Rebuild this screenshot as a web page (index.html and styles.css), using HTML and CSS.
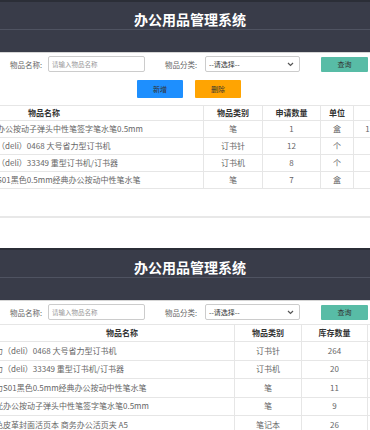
FILE: index.html
```html
<!DOCTYPE html>
<html lang="zh-CN">
<head>
    <meta charset="UTF-8">
    <meta name="viewport" content="width=device-width, initial-scale=1.0">
    <title>办公用品管理系统</title>
    <link rel="stylesheet" href="styles.css">
</head>
<body>
    <!-- 申请列表 -->
    <div class="panel">
        <header class="topbar">
            <div class="title-row"><h1>办公用品管理系统</h1></div>
            <div class="nav-row"></div>
        </header>
        <div class="search">
            <label class="label-name">物品名称:</label>
            <input type="text" class="input-name" placeholder="请输入物品名称">
            <label class="label-type">物品分类:</label>
            <div class="select">
                <select>
                    <option>--请选择--</option>
                </select>
                <svg width="7" height="5" viewBox="0 0 7 5"><path d="M1 1l2.5 2.5L6 1" fill="none" stroke="#555" stroke-width="1.2"/></svg>
            </div>
            <button class="btn btn-query">查询</button>
        </div>
        <div class="actions">
            <button class="btn btn-add">新增</button>
            <button class="btn btn-del">删除</button>
        </div>
        <div class="table-wrap">
            <table class="grid grid-apply">
                <colgroup>
                    <col class="c-name"><col class="c-type"><col class="c-num"><col class="c-unit"><col class="c-note">
                </colgroup>
                <thead>
                    <tr><th class="th-name">物品名称</th><th>物品类别</th><th>申请数量</th><th>单位</th><th>备注</th></tr>
                </thead>
                <tbody>
                    <tr><td class="td-name">晨光办公按动子弹头中性笔签字笔水笔0.5mm</td><td>笔</td><td>1</td><td>盒</td><td>1号楼领取</td></tr>
                    <tr><td class="td-name">得力（deli）0468 大号省力型订书机</td><td>订书针</td><td>12</td><td>个</td><td></td></tr>
                    <tr><td class="td-name">得力（deli）33349 重型订书机/订书器</td><td>订书机</td><td>8</td><td>个</td><td></td></tr>
                    <tr><td class="td-name">得力S01黑色0.5mm经典办公按动中性笔水笔</td><td>笔</td><td>7</td><td>盒</td><td></td></tr>
                </tbody>
            </table>
        </div>
    </div>

    <div class="gap-line"></div>

    <!-- 库存列表 -->
    <div class="panel">
        <header class="topbar">
            <div class="title-row"><h1>办公用品管理系统</h1></div>
            <div class="nav-row"></div>
        </header>
        <div class="search">
            <label class="label-name">物品名称:</label>
            <input type="text" class="input-name" placeholder="请输入物品名称">
            <label class="label-type">物品分类:</label>
            <div class="select">
                <select>
                    <option>--请选择--</option>
                </select>
                <svg width="7" height="5" viewBox="0 0 7 5"><path d="M1 1l2.5 2.5L6 1" fill="none" stroke="#555" stroke-width="1.2"/></svg>
            </div>
            <button class="btn btn-query">查询</button>
        </div>
        <div class="table-wrap stock-wrap">
            <table class="grid grid-stock">
                <colgroup>
                    <col class="c-name2"><col class="c-type2"><col class="c-stock"><col class="c-unit2">
                </colgroup>
                <thead>
                    <tr><th class="th-name">物品名称</th><th>物品类别</th><th>库存数量</th><th>单位</th></tr>
                </thead>
                <tbody>
                    <tr><td class="td-name">得力（deli）0468 大号省力型订书机</td><td>订书针</td><td>264</td><td>盒</td></tr>
                    <tr><td class="td-name">得力（deli）33349 重型订书机/订书器</td><td>订书机</td><td>20</td><td>个</td></tr>
                    <tr><td class="td-name">得力S01黑色0.5mm经典办公按动中性笔水笔</td><td>笔</td><td>11</td><td>盒</td></tr>
                    <tr><td class="td-name">晨光办公按动子弹头中性笔签字笔水笔0.5mm</td><td>笔</td><td>9</td><td>盒</td></tr>
                    <tr><td class="td-name">黑色皮革封面活页本 商务办公活页夹 A5</td><td>笔记本</td><td>26</td><td>本</td></tr>
                </tbody>
            </table>
        </div>
    </div>
</body>
</html>
```

FILE: styles.css
```css
* {
    box-sizing: border-box;
}
body {
    margin: 0;
    width: 370px;
    height: 430px;
    overflow: hidden;
    background: #fff;
    color: #333;
    font-family: "Noto Sans CJK SC", "Noto Sans", sans-serif;
}
.topbar {
    background: #393c49;
    border-top: 2px solid #2b2e37;
    border-bottom: 1px solid #d6d6d6;
}
.title-row {
    height: 28px;
    display: flex;
    align-items: center;
    justify-content: center;
    padding: 7px 0 0 10px;
    border-bottom: 1px solid #4f5361;
}
.title-row h1 {
    margin: 0;
    font-size: 14px;
    line-height: 1;
    font-weight: 700;
    color: #fff;
}
.nav-row {
    height: 22px;
}
.search {
    display: flex;
    align-items: center;
    height: 16px;
    margin-top: 3px;
    padding-left: 10px;
    font-size: 7.5px;
    color: #666;
}
.label-name {
    width: 38px;
}
.label-type {
    width: 40px;
}
.input-name {
    width: 97px;
    height: 16px;
    margin: 0 20px 0 0;
    padding: 0 3px;
    border: 1px solid #ccc;
    border-radius: 2px;
    font-family: inherit;
    font-size: 6.5px;
    color: #333;
    outline: none;
}
.input-name::placeholder {
    color: #999;
}
.select {
    display: flex;
    align-items: center;
    width: 95px;
    height: 16px;
    padding-right: 5px;
    border: 1px solid #ccc;
    border-radius: 2px;
    margin-right: 21px;
}
.select select {
    flex: 1;
    height: 14px;
    border: none;
    background: transparent;
    appearance: none;
    -webkit-appearance: none;
    padding: 0 3px;
    font-family: inherit;
    font-size: 7px;
    color: #333;
    outline: none;
}
.btn {
    border: none;
    padding: 0;
    font-family: inherit;
    font-size: 7px;
    color: #333;
    cursor: pointer;
}
.btn-query {
    width: 47px;
    height: 15px;
    background: #58bca6;
    border-radius: 1px;
}
.actions {
    display: flex;
    justify-content: center;
    gap: 12px;
    margin-top: 8px;
    padding-left: 8px;
}
.btn-add,
.btn-del {
    width: 46px;
    height: 18px;
    border-radius: 1px;
}
.btn-add {
    background: #1e8ffe;
}
.btn-del {
    background: #ffa402;
}
.table-wrap {
    overflow: hidden;
    margin-top: 7px;
}
.stock-wrap {
    margin-top: 4px;
}
.grid {
    border-collapse: collapse;
    table-layout: fixed;
    font-size: 8px;
    color: #666;
}
.grid th,
.grid td {
    border: 1px solid #e6e6e6;
    padding: 0 4px;
    text-align: center;
    white-space: nowrap;
    overflow: hidden;
    line-height: 1;
}
.grid th {
    color: #333;
    font-weight: 700;
}
.grid .td-name {
    text-align: left;
}
.grid .th-name {
    text-align: left;
}
.grid-apply {
    margin-left: -24px;
    width: 437px;
}
.grid-apply thead tr {
    height: 15px;
}
.grid-apply tbody tr {
    height: 17px;
}
.grid-apply .th-name {
    padding-left: 51px;
}
.c-name { width: 227px; }
.c-type { width: 59px; }
.c-num { width: 58px; }
.c-unit { width: 33px; }
.c-note { width: 60px; }
.grid-stock {
    margin-left: -18px;
    width: 445px;
}
.grid-stock thead tr {
    height: 17px;
}
.grid-stock tbody tr {
    height: 18.5px;
}
.grid-stock .th-name {
    padding-left: 123px;
}
.c-name2 { width: 252px; }
.c-type2 { width: 67px; }
.c-stock { width: 66px; }
.c-unit2 { width: 60px; }
.gap-line {
    height: 2px;
    margin: 27px 0 30px;
    background: #e8e8e8;
}
```
